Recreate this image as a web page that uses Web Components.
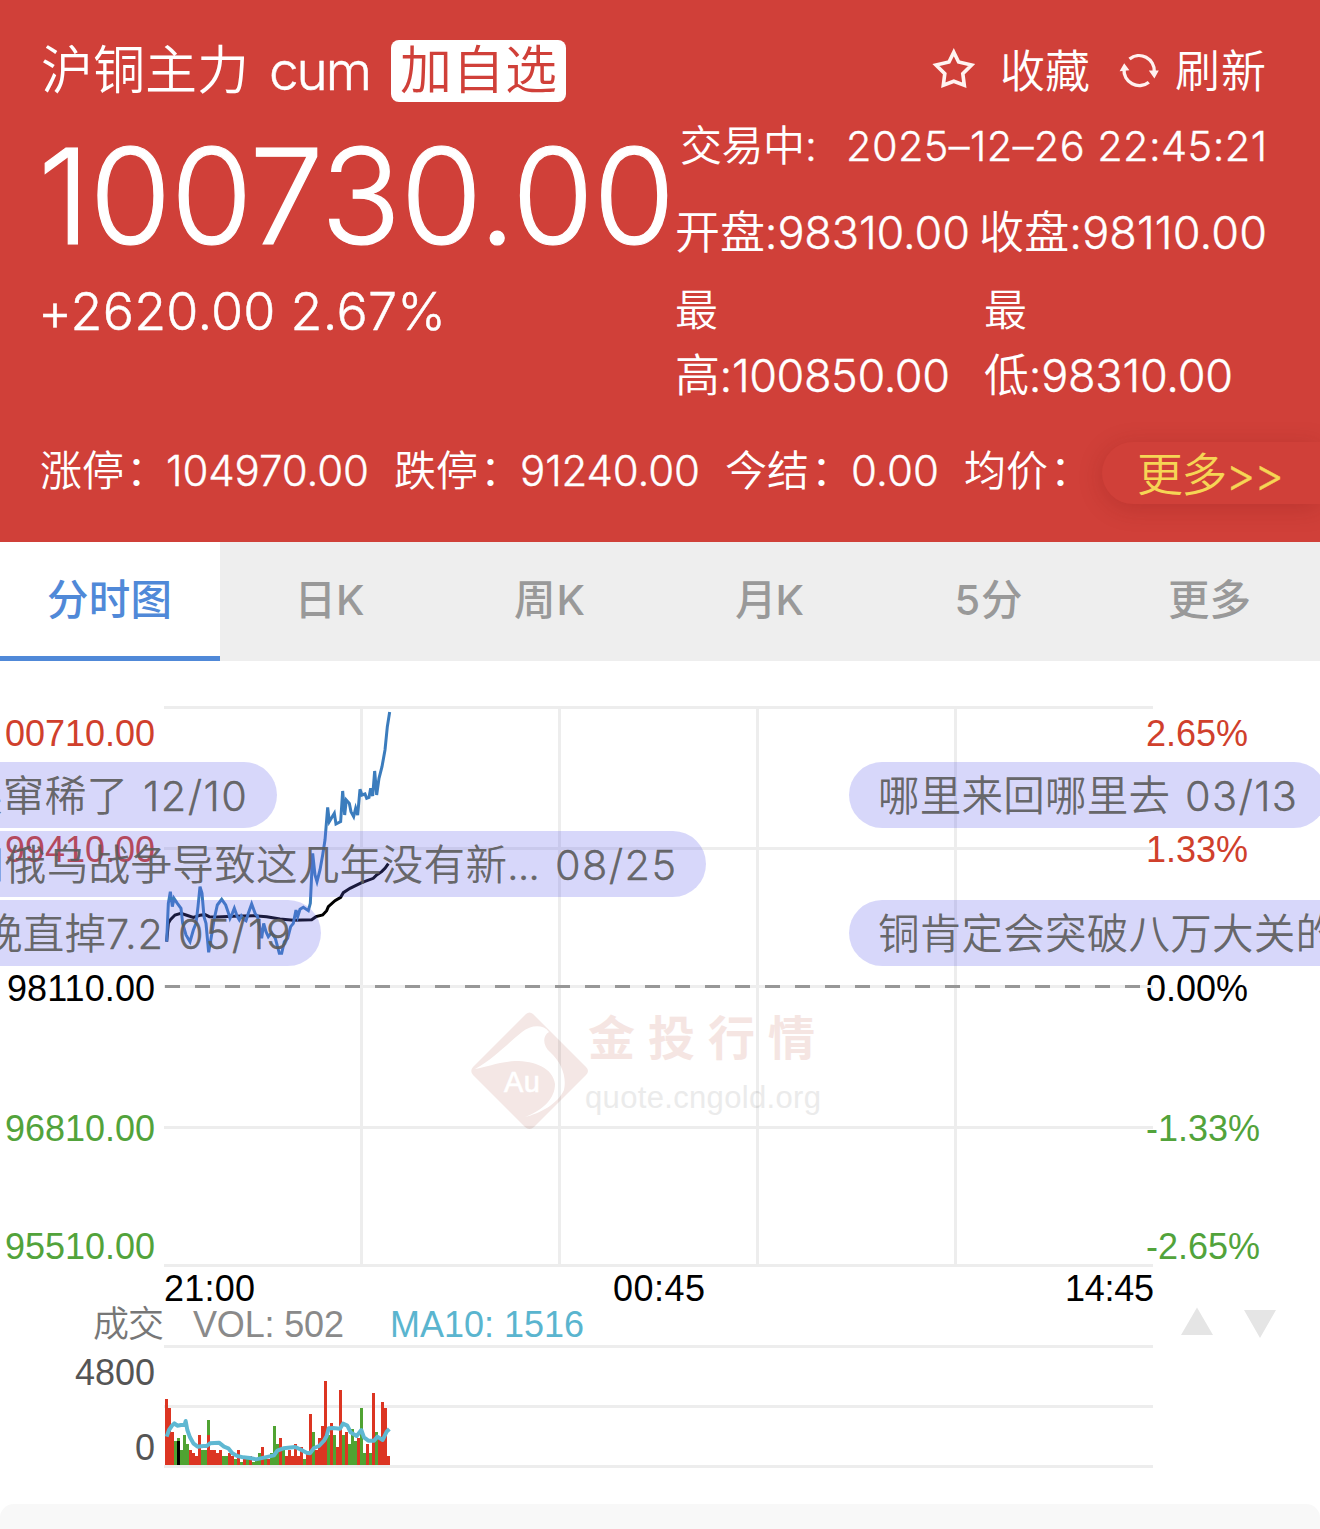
<!DOCTYPE html>
<html lang="zh-CN">
<head>
<meta charset="utf-8">
<title>沪铜主力</title>
<style>
html,body{margin:0;padding:0;background:#fff}
body{width:1320px;height:1529px;overflow:hidden;font-family:Inter,"Noto Sans CJK SC",sans-serif;font-weight:350}
</style>
</head>
<body>
<quote-page></quote-page>
<script>
const define = (name, html, after) => {
  const t = document.createElement('template');
  t.innerHTML = html;
  customElements.define(name, class extends HTMLElement {
    constructor() {
      super();
      this.attachShadow({ mode: 'open' }).appendChild(t.content.cloneNode(true));
    }
    connectedCallback() { if (after) after.call(this); }
  });
};

/* One line of text, tracked so that it spans the width given in "w".
   Latin runs of light text are thickened a little to sit level with the Chinese. */
define('fit-text', `<style>
:host{display:inline-block;white-space:pre;flex:none}
span{display:inline-block;white-space:pre}
::slotted(i){font-style:normal;font-weight:300;-webkit-text-stroke:.009em currentColor}
</style><span><slot></slot></span>`, function () {
  const size = this.getAttribute('size');
  if (size) this.style.fontSize = size + 'px';
  if (getComputedStyle(this).fontWeight === '350') {
    const runs = this.textContent.match(/[\x20-\x7e–]+|[^\x20-\x7e–]+/g) || [];
    this.replaceChildren(...runs.map(r => {
      if (!/^[\x20-\x7e–]/.test(r)) return document.createTextNode(r);
      const i = document.createElement('i');
      i.textContent = r;
      return i;
    }));
  }
  const w = +this.getAttribute('w');
  if (!w) return;
  const span = this.shadowRoot.querySelector('span');
  const n = [...this.textContent].length;
  const ls = (w - span.getBoundingClientRect().width) / Math.max(1, n - 1);
  span.style.letterSpacing = ls + 'px';
  this.style.width = w + 'px';
});

define('star-icon', `<style>:host{display:block;flex:none;width:44px;height:42px}svg{display:block}</style>
<svg width="44" height="42" viewBox="932 47 44 42"><path d="M953.8 51.2 958.6 61 971.6 64 962.8 72.6 964.3 84.2 953.8 80.2 943.3 84.2 944.8 72.6 936 64 949 61Z" fill="none" stroke="#fff3f1" stroke-width="3.6" stroke-linejoin="miter"/></svg>`);

define('refresh-icon', `<style>:host{display:block;flex:none;width:42px;height:40px}svg{display:block}</style>
<svg width="42" height="40" viewBox="1118 50 42 40"><g fill="none" stroke="#fff1ef" stroke-width="3.4"><path d="M1129.500 59A15.300 15.600 0 0 1 1154.300 72"/><path d="M1148.800 82.200A15.300 15.600 0 0 1 1124 69"/></g><path d="M1148.800 70.500H1158.800L1154.400 78.500ZM1119.600 71.300 1124.200 63.200 1129.400 70.300Z" fill="#fff1ef"/></svg>`);

define('more-pill', `<style>
:host{display:flex;flex:none;align-items:center;box-sizing:border-box;width:218px;height:62px;padding:1px 0 0 35px;border-radius:31px 0 0 31px;background:#d04039;box-shadow:0 4px 24px rgba(120,20,20,.24);color:#f6d555;font-size:46px;line-height:62px}
</style><slot></slot>`);

define('quote-header', `<style>
:host{display:flex;flex-direction:column;height:542px;background:#d04039;color:#fff;overflow:hidden}
.top{display:flex;height:110px;box-sizing:border-box;padding:32px 54px 0 41px;align-items:center;line-height:78px}
.badge{display:flex;flex:none;box-sizing:border-box;justify-content:center;align-items:center;width:175px;height:62px;margin-left:19px;border-radius:8px;background:#fff;color:#d04039;line-height:62px}
.star{margin-left:366px;margin-top:-5px}
.fav{margin:2px 0 0 24px}
.ref{margin:-2px 0 0 28px}
.new{margin:2px 0 0 15px}
.name{margin-top:-1px}
.cum{margin-left:20px}
.main{display:flex;height:299px;padding-left:41px}
.left{display:flex;flex-direction:column;width:634px}
.price{line-height:172px;height:172px;margin-left:-3px}
.chg{line-height:60px;height:60px;margin-left:-3px}
.right{display:flex;flex-direction:column;width:592px}
.time{display:flex;height:72px;line-height:72px;padding-left:5px;white-space:nowrap}
.row{display:flex;height:88px;padding-top:7px;line-height:88px;justify-content:space-between}
.rows{display:flex;line-height:66px}
.col{display:flex;flex-direction:column}
.col+.col{margin-left:34px}
.bot{display:flex;height:124px;line-height:124px;padding-left:40px;align-items:center;justify-content:space-between}
.bot .items{display:flex}
.items .k:not(:first-child){margin-left:25px}
.items .c{margin:0 -2px 0 2px}
more-pill{margin-top:4px}
</style>
<div class="top"><fit-text class="name" size="52" w="208">沪铜主力</fit-text><fit-text class="cum" size="53" w="103">cum</fit-text>
<div class="badge"><fit-text size="52" w="157">加自选</fit-text></div>
<star-icon class="star"></star-icon><fit-text class="fav" size="45" w="90">收藏</fit-text>
<refresh-icon class="ref"></refresh-icon><fit-text class="new" size="45" w="91">刷新</fit-text></div>
<div class="main">
 <div class="left"><fit-text class="price" size="132.5" w="637">100730.00</fit-text><fit-text class="chg" size="52" w="408">+2620.00 2.67%</fit-text></div>
 <div class="right">
  <div class="time"><fit-text size="42" w="125">交易中</fit-text><fit-text size="42" w="41">:</fit-text><fit-text size="41.5" w="421">2025–12–26 22:45:21</fit-text></div>
  <div class="row"><fit-text size="45" w="295">开盘:98310.00</fit-text><fit-text size="45" w="288">收盘:98110.00</fit-text></div>
  <div class="rows"><div class="col"><fit-text size="43">最</fit-text><fit-text size="45" w="275">高:100850.00</fit-text></div>
  <div class="col"><fit-text size="43">最</fit-text><fit-text size="45" w="249">低:98310.00</fit-text></div></div>
 </div>
</div>
<div class="bot"><div class="items">
<fit-text class="k" size="42" w="84">涨停</fit-text><fit-text class="c" size="42" w="42">：</fit-text><fit-text size="42" w="203">104970.00</fit-text>
<fit-text class="k" size="42" w="84">跌停</fit-text><fit-text class="c" size="42" w="42">：</fit-text><fit-text size="42" w="180">91240.00</fit-text>
<fit-text class="k" size="42" w="84">今结</fit-text><fit-text class="c" size="42" w="42">：</fit-text><fit-text size="42" w="88">0.00</fit-text>
<fit-text class="k" size="42" w="84">均价</fit-text><fit-text class="c" size="42" w="42">：</fit-text></div>
<more-pill><fit-text w="147">更多&gt;&gt;</fit-text></more-pill></div>`);

define('chart-tab', `<style>
:host{display:flex;flex:1;justify-content:center;box-sizing:border-box;height:119px;line-height:117px;font-size:41.5px;font-weight:500;color:#999;border-bottom:5px solid transparent;padding-right:1px}
:host([active]){background:#fff;color:#5089d8;border-color:#5089d8}
</style><slot></slot>`);

define('chart-tabs', `<style>:host{display:flex;height:119px;background:#eee}</style>
<chart-tab active><fit-text w="125">分时图</fit-text></chart-tab><chart-tab><fit-text w="70">日K</fit-text></chart-tab><chart-tab><fit-text w="71">周K</fit-text></chart-tab><chart-tab><fit-text w="69">月K</fit-text></chart-tab><chart-tab><fit-text w="68" style="margin-right:2px">5分</fit-text></chart-tab><chart-tab><fit-text w="83">更多</fit-text></chart-tab>`);

/* Traces are kept in thirds of a pixel, measured from (0, 690). */
const price = '500,755 505,640 511,605 517,650 522,625 532,640 543,655 548,700 558,735 570,755 580,720 588,700 594,650 600,590 606,610 612,680 618,700 626,787 634,740 642,690 652,645 665,628 677,645 684,665 690,685 697,670 703,655 712,680 718,690 724,678 731,688 738,692 745,670 755,642 766,672 772,678 779,710 785,745 791,700 798,725 805,740 815,728 826,745 838,790 845,790 853,755 863,745 872,710 880,700 888,660 893,680 900,658 910,652 925,662 931,640 938,490 945,555 951,575 960,540 968,495 975,450 983,352 988,395 994,385 1003,370 1008,402 1022,395 1028,303 1034,375 1039,330 1048,340 1053,365 1061,380 1067,355 1073,375 1080,298 1086,315 1095,312 1100,325 1107,322 1112,295 1118,318 1124,243 1130,315 1137,265 1146,230 1155,180 1162,110 1169,66';
const average = '500,755 505,700 512,688 525,675 543,670 558,675 580,682 600,676 615,674 628,680 650,681 700,679 760,677 800,680 840,687 880,691 935,689 948,680 968,675 980,662 985,650 1005,632 1022,622 1030,608 1050,595 1085,578 1120,565 1130,555 1145,545 1155,535 1165,521';
/* Volume bars: colour and height, three pixels to a unit. */
const volume = 'r22 r19 r11 g8 k8 g5 g10 g7 r5 r4 r3 r10 g5 g5 r10 r5 r5 r4 r5 g3 g3 r4 r3 g2 r5 g1 r2 g2 r3 g1 g2 g4 r6 g2 r2 g4 g13 g7 r9 g5 r3 r5 r3 r7 r3 r6 g2 r4 r17 g11 r5 r9 r13 r28 g10 r14 g10 r6 r25 g10 r11 g7 g12 g8 r9 g19 g4 r7 g4 r24 g11 r9 r21 r19 r3'.split(' ');
const volumeAvg = '50,230 57,210 66,197 73,190 82,197 93,195 104,194 107,183 112,210 120,232 130,250 143,260 160,258 170,258 180,250 207,248 222,260 235,265 247,280 262,288 280,292 300,294 318,298 345,292 372,286 382,272 400,265 436,261 450,268 470,278 480,280 492,264 507,258 522,242 530,228 536,205 550,204 570,206 579,191 592,197 602,217 620,228 634,210 642,232 655,242 672,242 682,230 698,240 710,215 718,207';

define('price-chart', `<style>
:host{display:block;height:843px}
svg{display:block;font:400 36px "Liberation Sans","Noto Sans CJK SC",sans-serif}
</style>
<svg width="1320" height="843" viewBox="0 661 1320 843">
<g class="mark">
 <path d="M526 1014Q529.500 1011 533 1014L586 1067Q590 1071 586 1075L534 1127Q529.500 1131 525 1127L473 1075Q469.500 1071 473 1067Z" fill="#f4e7e5"/>
 <path d="M475 1069C495 1058 508 1043 522 1032C531 1025 543 1024 549 1032C542 1036 543 1046 550 1052C561 1062 567 1076 564 1090C557 1105 540 1113 524 1117.500C544 1110 555 1098 555 1084C553 1068 535 1061 515 1061C498 1062 487 1067 475 1069Z" fill="#fff"/>
 <text x="504" y="1092" font-size="29" fill="#fff" stroke="#fff" stroke-width=".6" textLength="36">Au</text>
 <text x="588" y="1055" font-size="47" font-weight="700" fill="#f5e5e2" textLength="227">金投行情</text>
 <text x="585" y="1108" font-size="31" fill="#ebebeb" textLength="236">quote.cngold.org</text>
</g>
<g stroke="#000" stroke-opacity=".07" stroke-width="3" fill="none">
 <path d="M164 707.500H1153M164 848.500H1153M164 1127.500H1153M164 1265.500H1153M361.500 709V1264M559.500 709V1264M757.500 709V1264M955.500 709V1264M164 1346.500H1153M164 1406.500H1153M164 1466.500H1153"/>
</g>
<g text-anchor="end">
 <g fill="#d0402c"><text x="155" y="746" textLength="150">00710.00</text><text x="155" y="862" textLength="150">99410.00</text></g>
 <text x="155" y="1001" textLength="148">98110.00</text>
 <g fill="#52a33b"><text x="155" y="1141" textLength="150">96810.00</text><text x="155" y="1259" textLength="150">95510.00</text></g>
 <text x="1154" y="1301" textLength="89">14:45</text>
 <g fill="#555"><text x="155" y="1385" textLength="80">4800</text><text x="155" y="1460">0</text></g>
</g>
<g fill="#d0402c"><text x="1146" y="746" textLength="102">2.65%</text><text x="1146" y="862" textLength="102">1.33%</text></g>
<text x="1146" y="1001" textLength="102">0.00%</text>
<g fill="#52a33b"><text x="1146" y="1141" textLength="114">-1.33%</text><text x="1146" y="1259" textLength="114">-2.65%</text></g>
<path d="M164 986.500H1153" stroke="#eee" stroke-width="3"/>
<path d="M165 986.500H1153" stroke="#979797" stroke-width="3" stroke-dasharray="15 15"/>
<text x="164" y="1301" textLength="91">21:00</text><text x="613" y="1301" textLength="92">00:45</text>
<text x="93" y="1337" fill="#777" textLength="71" style="font-family:'Noto Sans CJK SC',sans-serif;font-weight:350">成交</text>
<text x="193" y="1337" fill="#8a8a8a" textLength="151">VOL: 502</text>
<text x="390" y="1337" fill="#5ab5cf" textLength="194">MA10: 1516</text>
<path d="M1197 1307.500 1213 1335H1181ZM1244 1310H1276L1260 1338Z" fill="#e5e5e5"/>
<g class="bars" shape-rendering="crispEdges"></g>
<g fill="none" stroke-linejoin="round">
 <g transform="translate(150 1360) scale(.33333)"><polyline points="${volumeAvg}" stroke="#5fb8d2" stroke-width="12"/></g>
 <g transform="translate(0 690) scale(.33333)" stroke-width="9" stroke-linejoin="miter"><polyline points="${average}" stroke="#000"/><polyline points="${price}" stroke="#3b7cbd"/></g>
</g>
</svg>`, function () {
  const colours = { r: '#dc3522', g: '#50a332', k: '#000' };
  this.shadowRoot.querySelector('.bars').innerHTML = volume.map((v, i) => {
    const h = v.slice(1) * 3;
    return `<rect x="${165 + i * 3}" y="${1465 - h}" width="3" height="${h}" fill="${colours[v[0]]}"/>`;
  }).join('') + '<rect x="177" y="1438" width="3" height="3" fill="#50a332"/><rect x="207" y="1420" width="3" height="15" fill="#50a332"/>';
});

define('float-comment', `<style>
:host{position:absolute;display:flex;align-items:center;box-sizing:border-box;height:66px;padding:1px 30px 0 29px;border-radius:33px;background:rgba(101,101,235,.26);color:rgba(92,92,92,.93);font-size:41.5px;line-height:66px;white-space:nowrap}
::slotted(.d){margin-left:15px}
</style><slot></slot>`);

define('comment-layer', `<style>
:host{position:absolute;left:0;top:762px;width:1320px;height:204px;overflow:hidden}
</style>
<float-comment style="right:1043px;top:0"><fit-text w="167">英窜稀了</fit-text><fit-text class="d" w="104">12/10</fit-text></float-comment>
<float-comment style="left:849px;top:0"><fit-text w="292">哪里来回哪里去</fit-text><fit-text class="d" w="112">03/13</fit-text></float-comment>
<float-comment style="right:614px;top:69px"><fit-text w="544">和俄乌战争导致这几年没有新</fit-text><fit-text w="33">...</fit-text><fit-text class="d" w="121">08/25</fit-text></float-comment>
<float-comment style="right:999px;top:138px"><fit-text w="125">晚直掉</fit-text><fit-text w="57">7.2</fit-text><fit-text class="d" w="113">05/19</fit-text></float-comment>
<float-comment style="left:849px;top:138px"><fit-text w="459">铜肯定会突破八万大关的</fit-text></float-comment>`);

define('next-panel', `<style>:host{display:block;height:25px;background:#f8f8f8;border-radius:14px 14px 0 0}</style>`);

define('quote-page', `<style>:host{display:flex;flex-direction:column;position:relative;width:1320px;height:1529px;overflow:hidden;background:#fff}</style>
<quote-header></quote-header><chart-tabs></chart-tabs><price-chart></price-chart><next-panel></next-panel><comment-layer></comment-layer>`);
</script>
</body>
</html>
